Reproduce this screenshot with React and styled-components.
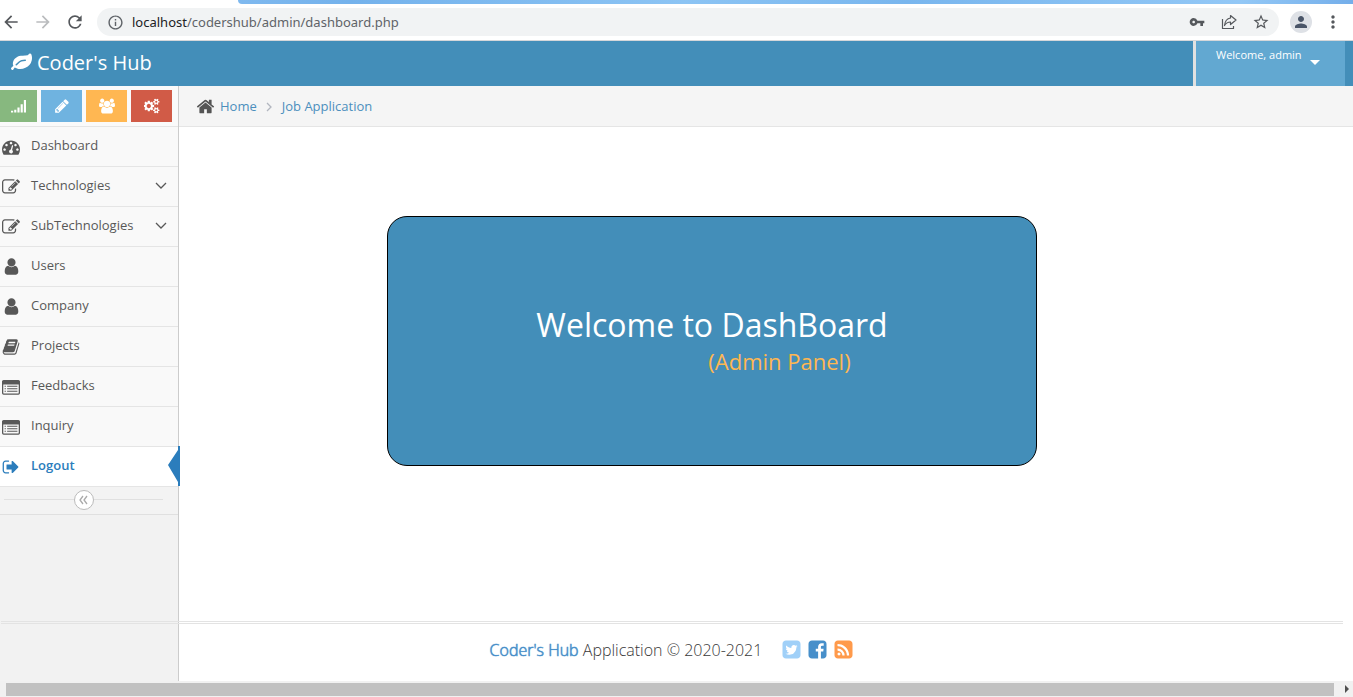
import React from "react";
import styled, { createGlobalStyle, css } from "styled-components";
import { MdArrowBack, MdArrowForward, MdRefresh, MdInfoOutline, MdVpnKey, MdStarBorder, MdPerson, MdMoreVert } from "react-icons/md";

const Global = createGlobalStyle`
  *, *::before, *::after { box-sizing: border-box; }
  body { margin: 0; background: #fff; font: 13px/20px "Open Sans", sans-serif; color: #393939; }
  a { text-decoration: none; color: #4c8fbd; }
  svg { display: block; flex: none; }
`;

const Button = styled.button`
  border: 0;
  padding: 0;
  background: none;
  font: inherit;
  cursor: pointer;
`;

const Window = styled.div`
  display: flex;
  flex-direction: column;
  min-height: 100vh;
`;

/* Browser chrome */
const TabStrip = styled.div`
  height: 4px;
  margin-left: 238px;
  border-bottom-left-radius: 6px;
  background: linear-gradient(90deg, #7fb9ef, #74b2ec 10%, #8cc4f4 40%, #79b6ee 60%, #93c8f6 90%, #74aeea);
`;
const Toolbar = styled.div`
  display: flex;
  align-items: center;
  height: 37px;
  padding: 0 5px 0 1px;
  border-bottom: 1px solid #d5d7da;
  color: #5f6368;
`;
const ToolButton = styled(Button)`
  display: grid;
  place-items: center;
  width: ${(p) => p.$width || 32}px;
  height: 28px;
  color: ${(p) => (p.$muted ? "#babcbe" : "#55585c")};
`;
const AddressBar = styled.div`
  display: flex;
  align-items: center;
  flex: 1;
  min-width: 0;
  height: 28px;
  margin-left: 11px;
  padding: 0 2px 0 10px;
  border-radius: 14px;
  background: #f1f3f4;
`;
const Address = styled.div`
  flex: 1;
  margin-left: 8px;
  font: 13px/20px "Noto Sans", "Open Sans", sans-serif;
  color: #5f6368;
  b { font-weight: 400; color: #202124; }
`;
const Avatar = styled(Button)`
  display: grid;
  place-items: center;
  width: 22px;
  height: 22px;
  margin: 0 6px 0 11px;
  border-radius: 50%;
  background: #dee1e6;
  color: #4a5568;
`;

/* Application header */
const Header = styled.header`
  display: flex;
  justify-content: space-between;
  height: 45px;
  padding: 0 8px 0 11px;
  background: #438eb9;
`;
const Brand = styled.a`
  display: flex;
  align-items: center;
  gap: 5px;
  padding-bottom: 2px;
  font-size: 20px;
  color: #fff;
`;
const UserMenu = styled(Button)`
  display: flex;
  align-items: flex-start;
  gap: 8px;
  width: 152px;
  padding: 4px 0 0 20px;
  border-left: 3px solid #e1e1e1;
  background: #62a8d1;
  font-size: 11px;
  color: #fff;
  svg { margin-top: 15px; }
`;

/* Page body */
const Body = styled.div`
  display: grid;
  flex: 1;
  grid-template-columns: 179px 1fr;
  grid-template-rows: 1fr 60px;
`;
const Sidebar = styled.aside`
  grid-column: 1;
  grid-row: 1 / -1;
  border-right: 1px solid #ccc;
  background: #f2f2f2;
`;
const Shortcuts = styled.div`
  display: flex;
  gap: 4px;
  height: 41px;
  padding: 4px 0;
  border-bottom: 1px solid #e5e5e5;
  background: #fafafa;
`;
const Shortcut = styled(Button)`
  display: grid;
  place-items: center;
  width: 41px;
  height: 32px;
  background: ${(p) => p.$color};
  color: #fff;
  &:first-child { width: 37px; }
`;
const Menu = styled.ul`
  list-style: none;
  margin: 0;
  padding: 0;
`;
const MenuItem = styled.li`
  position: relative;
  height: 40px;
  border-bottom: 1px solid #e5e5e5;
  background: ${(p) => (p.$active ? "#fff" : "#f9f9f9")};
`;
const fakeBold = css`
  text-shadow: 0 0 1px currentColor;
  -webkit-text-stroke: thin;
`;
const MenuLink = styled.a`
  display: grid;
  grid-template-columns: 22px 1fr 18px;
  column-gap: 9px;
  align-items: center;
  height: 36px;
  padding-right: 5px;
  color: #585858;
  > svg:first-child { margin: 3px auto 0; }
  > svg:last-child { margin-top: 2px; }
  ${(p) => p.$active && css`font-weight: 600; color: #2b7dbc;`}
`;
const ActiveMark = styled.svg`
  position: absolute;
  top: -1px;
  right: -2px;
`;
const Collapse = styled.div`
  display: flex;
  align-items: center;
  height: 28px;
  padding: 0 15px 2px 4px;
  border-bottom: 1px solid #e0e0e0;
  background: #f3f3f3;
  &::before, &::after { content: ""; flex: 1; height: 1px; background: #e0e0e0; }
`;
const CollapseButton = styled(Button)`
  display: grid;
  place-items: center;
  width: 20px;
  height: 20px;
  border: 1px solid #bbb;
  border-radius: 50%;
  background: #fff;
  color: #aaa;
`;
const Main = styled.main`
  grid-column: 2;
  grid-row: 1;
  min-width: 0;
`;
const Breadcrumbs = styled.nav`
  display: flex;
  align-items: center;
  height: 41px;
  padding-left: 17px;
  border-bottom: 1px solid #e5e5e5;
  background: #f5f5f5;
  a { margin-left: 5px; }
  a + svg { margin: 2px 4px 0 9px; }
`;
const WelcomeCard = styled.section`
  display: flex;
  flex-direction: column;
  align-items: center;
  justify-content: center;
  max-width: 650px;
  min-height: 250px;
  margin: 89px 16px 0 208px;
  border: 1px solid #000;
  border-radius: 20px;
  background: #438eb9;
`;
const Title = styled.h1`
  margin: 0;
  font-size: 32px;
  line-height: 40px;
  font-weight: 400;
  color: #fff;
`;
const Subtitle = styled.p`
  margin: 0;
  padding-left: 135px;
  font-size: 22px;
  line-height: 32px;
  color: #ffb752;
`;
const Footer = styled.footer`
  grid-column: 1 / -1;
  grid-row: 2;
  display: flex;
  align-items: center;
  justify-content: center;
  margin: 0 10px 0 1px;
  border-top: 3px double #e3e3e3;
  padding-bottom: 6px;
  font-size: 16px;
  font-weight: 300;
`;
const FooterBrand = styled.b`
  font-weight: 300;
  color: #478fca;
  ${fakeBold}
`;
const Socials = styled.div`
  display: flex;
  gap: 5px;
  margin-left: 19px;
`;
const Social = styled.a`
  color: ${(p) => p.$color};
`;

/* Horizontal scroll bar */
const ScrollTrack = styled.div`
  display: flex;
  align-items: center;
  height: 16px;
  padding: 0 4px 0 6px;
  background: #f1f1f1;
`;
const ScrollThumb = styled.div`
  flex: 1;
  height: 13px;
  margin-right: 11px;
  background: #c1c1c1;
`;

const paths = {
  leaf: "M1280 704q0-26-19-45t-45-19q-172 0-318 49.5t-259.5 134-235.5 219.5q-19 21-19 45 0 26 19 45t45 19q24 0 45-19 27-24 74-71t67-66q137-124 268.5-176t313.5-52q26 0 45-19t19-45zm512-198q0 95-20 193-46 224-184.5 383t-357.5 268q-214 108-438 108-148 0-286-47-15-5-88-42t-96-37q-16 0-39.5 32t-45 70-52.5 70-60 32q-43 0-63.5-17.5t-45.5-59.5q-2-4-6-11t-5.5-10-3-9.5-1.5-13.5q0-35 31-73.5t68-65.5 68-56 31-48q0-4-14-38t-16-44q-9-51-9-104 0-115 43.5-220t119-184.5 170.5-139 204-95.5q55-18 145-25.5t179.5-9 178.5-6 163.5-24 113.5-56.5l29.5-29.5 29.5-28 27-20 36.5-16 43.5-4.5q39 0 70.5 46t47.5 112 24 124 8 96z",
  signal: "M0 1408h256v192h-256zM384 1280h256v320h-256zM768 1024h256v576h-256zM1152 640h256v960h-256zM1536 128h256v1472h-256z",
  pencil: "M491 1536l91-91-235-235-91 91v107h128v128h107zm523-928q0-22-22-22-10 0-17 7l-542 542q-7 7-7 17 0 22 22 22 10 0 17-7l542-542q7-7 7-17zm-54-192l416 416-832 832h-416v-416zm683 96q0 53-37 90l-166 166-416-416 166-165q36-38 90-38 53 0 91 38l235 234q37 39 37 91z",
  users: "M593 896q-162 5-265 128H194q-82 0-138-40.500T0 865q0-353 124-353 6 0 43.500 21t97.500 42.500T384 597q67 0 133-23-5 37-5 66 0 139 81 256zm1071 637q0 120-73 189.500t-194 69.500H523q-121 0-194-69.500T256 1533q0-53 3.500-103.500t14-109T300 1212t43-97.500 62-81 85.500-53.500T602 960q10 0 43 21.500t73 48 107 48 135 21.500 135-21.500 107-48 73-48 43-21.500q61 0 111.500 20t85.500 53.500 62 81 43 97.500 26.500 108.500 14 109 3.500 103.500zM640 256q0 106-75 181t-181 75-181-75-75-181 75-181T384 0t181 75 75 181zm704 384q0 159-112.500 271.500T960 1024 688.500 911.500 576 640t112.500-271.500T960 256t271.500 112.500T1344 640zm576 225q0 78-56 118.500t-138 40.500h-134q-103-123-265-128 81-117 81-256 0-29-5-66 66 23 133 23 59 0 119-21.500t97.500-42.500 43.500-21q124 0 124 353zm-128-609q0 106-75 181t-181 75-181-75-75-181 75-181 181-75 181 75 75 181z",
  cogs: "M832 896q0-106-75-181t-181-75-181 75-75 181 75 181 181 75 181-75 75-181zm768 512q0-52-38-90t-90-38-90 38-38 90q0 53 37.500 90.500t90.500 37.500 90.500-37.500 37.500-90.500zm0-1024q0-52-38-90t-90-38-90 38-38 90q0 53 37.500 90.500t90.500 37.500 90.500-37.500 37.500-90.500zm-384 421v185q0 10-7 19.500t-16 10.500l-155 24q-11 35-32 76 34 48 90 115 7 11 7 20 0 12-7 19-23 30-82.500 89.500t-78.500 59.500q-11 0-21-7l-115-90q-37 19-77 31-11 108-23 155-7 24-30 24h-186q-11 0-20-7.500t-10-17.500l-23-153q-34-10-75-31l-118 89q-7 7-20 7-11 0-21-8-144-133-144-160 0-9 7-19 10-14 41-53t47-61q-23-44-35-82l-152-24q-10-1-17-9.500t-7-19.500v-185q0-10 7-19.500t16-10.500l155-24q11-35 32-76-34-48-90-115-7-11-7-20 0-12 7-20 22-30 82-89t79-59q11 0 21 7l115 90q34-18 77-32 11-108 23-154 7-24 30-24h186q11 0 20 7.500t10 17.500l23 153q34 10 75 31l118-89q8-7 20-7 11 0 21 8 144 133 144 160 0 8-7 19-12 16-42 54t-45 60q23 48 34 82l152 23q10 2 17 10.500t7 19.500zm640 533v140q0 16-149 31-12 27-30 52 51 113 51 138 0 4-4 7-122 71-124 71-8 0-46-47t-52-68q-20 2-30 2t-30-2q-14 21-52 68t-46 47q-2 0-124-71-4-3-4-7 0-25 51-138-18-25-30-52-149-15-149-31v-140q0-16 149-31 13-29 30-52-51-113-51-138 0-4 4-7 4-2 35-20t59-34 30-16q8 0 46 46.500t52 67.500q20-2 30-2t30 2q51-71 92-112l6-2q4 0 124 70 4 3 4 7 0 25-51 138 17 23 30 52 149 15 149 31zm0-1024v140q0 16-149 31-12 27-30 52 51 113 51 138 0 4-4 7-122 71-124 71-8 0-46-47t-52-68q-20 2-30 2t-30-2q-14 21-52 68t-46 47q-2 0-124-71-4-3-4-7 0-25 51-138-18-25-30-52-149-15-149-31v-140q0-16 149-31 13-29 30-52-51-113-51-138 0-4 4-7 4-2 35-20t59-34 30-16q8 0 46 46.500t52 67.500q20-2 30-2t30 2q51-71 92-112l6-2q4 0 124 70 4 3 4 7 0 25-51 138 17 23 30 52 149 15 149 31z",
  gauge: "M384 1152q0-53-37.5-90.5t-90.5-37.5-90.5 37.5-37.5 90.5 37.5 90.5 90.5 37.5 90.5-37.5 37.5-90.5zm192-448q0-53-37.5-90.5t-90.5-37.5-90.5 37.5-37.5 90.5 37.5 90.5 90.5 37.5 90.5-37.5 37.5-90.5zm428 481l101-382q6-26-7.5-48.5t-38.5-29.5-48 6.5-30 39.5l-101 382q-60 5-107 43.5t-63 98.5q-20 77 20 146t117 89 146-20 89-117q16-60-6-117t-72-91zm660-33q0-53-37.5-90.5t-90.5-37.5-90.5 37.5-37.5 90.5 37.5 90.5 90.5 37.5 90.5-37.5 37.5-90.5zm-640-640q0-53-37.5-90.5t-90.5-37.5-90.5 37.5-37.5 90.5 37.5 90.5 90.5 37.5 90.5-37.5 37.5-90.5zm448 192q0-53-37.5-90.5t-90.5-37.5-90.5 37.5-37.5 90.5 37.5 90.5 90.5 37.5 90.5-37.5 37.5-90.5zm320 448q0 261-141 483-19 29-54 29h-1402q-35 0-54-29-141-221-141-483 0-182 71-348t191-286 286-191 348-71 348 71 286 191 191 286 71 348z",
  edit: "M888 1184l116-116-152-152-116 116v56h96v96h56zm440-720q-16-16-33 1l-350 350q-17 17-1 33t33-1l350-350q17-17 1-33zm80 594v190q0 119-84.5 203.5t-203.5 84.5h-832q-119 0-203.5-84.5t-84.5-203.5v-832q0-119 84.5-203.5t203.5-84.5h832q63 0 117 25 15 7 18 23 3 17-9 29l-49 49q-14 14-32 8-23-6-45-6h-832q-66 0-113 47t-47 113v832q0 66 47 113t113 47h832q66 0 113-47t47-113v-126q0-13 9-22l64-64q15-15 35-7t20 29zm-96-738l288 288-672 672h-288v-288zm444 132l-92 92-288-288 92-92q28-28 68-28t68 28l152 152q28 28 28 68t-28 68z",
  user: "M1536 1399q0 109-62.5 187t-150.5 78h-854q-88 0-150.5-78t-62.5-187q0-85 8.5-160.5t31.5-152 58.5-131 94-89 134.5-34.5q131 128 313 128t313-128q76 0 134.5 34.5t94 89 58.5 131 31.5 152 8.5 160.5zm-256-887q0 159-112.5 271.5t-271.5 112.5-271.5-112.5-112.5-271.5 112.5-271.5 271.5-112.5 271.5 112.5 112.5 271.5z",
  book: "M1703 478q40 57 18 129l-275 906q-19 64-76.5 107.5t-122.5 43.5h-923q-77 0-148.5-53.5t-99.5-131.5q-24-67-2-127 0-4 3-27t4-37q1-8-3-21.5t-3-19.5q2-11 8-21t16.5-23.5 16.5-23.5q23-38 45-91.5t30-91.5q3-10 .5-30t-.5-28q3-11 17-28t17-23q21-36 42-92t25-90q1-9-2.5-32t.5-28q4-13 22-30.5t22-22.5q19-26 42.5-84.5t27.5-96.5q1-8-3-25.5t-2-26.5q2-8 9-18t18-23 17-21q8-12 16.5-30.5t15-35 16-36 19.5-32 26.5-23.5 36-11.5 47.5 5.5l-1 3q38-9 51-9h761q74 0 114 56t18 130l-274 906q-36 119-71.5 153.5t-128.5 34.5h-869q-27 0-38 15-11 16-1 43 24 70 144 70h923q29 0 56-15.5t35-41.5l300-987q7-22 5-57 38 15 59 43zm-1064 2q-4 13 2 22.5t20 9.5h608q13 0 25.5-9.5t16.5-22.5l21-64q4-13-2-22.5t-20-9.5h-608q-13 0-25.5 9.5t-16.5 22.5zm-83 256q-4 13 2 22.5t20 9.5h608q13 0 25.5-9.5t16.5-22.5l21-64q4-13-2-22.5t-20-9.5h-608q-13 0-25.5 9.5t-16.5 22.5z",
  list: "M160 192h1472q66 0 113 47t47 113v1152q0 66-47 113t-113 47H160q-66 0-113-47T0 1504V352q0-66 47-113t113-47zM128 640v864q0 32 32 32h1472q32 0 32-32V640zM256 768h128v110H256zM512 768h1024v110H512zM256 1010h128v110H256zM512 1010h1024v110H512zM256 1260h128v120H256zM512 1260h1024v120H512z",
  logout: "M704 1440q0 4 1 20t.5 26.5-3 23.5-10 19.5-20.5 6.5h-320q-119 0-203.5-84.5t-84.5-203.5v-704q0-119 84.5-203.5t203.5-84.5h320q13 0 22.5 9.5t9.5 22.5q0 4 1 20t.5 26.5-3 23.5-10 19.5-20.5 6.5h-320q-66 0-113 47t-47 113v704q0 66 47 113t113 47h312l11.5 1 11.5 3 8 5.5 7 9 2 13.5zm928-544q0 26-19 45l-544 544q-19 19-45 19t-45-19-19-45v-288h-448q-26 0-45-19t-19-45v-384q0-26 19-45t45-19h448v-288q0-26 19-45t45-19 45 19l544 544q19 19 19 45z",
  home: "M1472 992v480q0 26-19 45t-45 19h-384v-384h-256v384h-384q-26 0-45-19t-19-45v-480q0-1 .5-3t.5-3l575-474 575 474q1 2 1 6zm223-69l-62 74q-8 9-21 11h-3q-13 0-21-7l-692-577-692 577q-12 8-24 7-13-2-21-11l-62-74q-8-10-7-23.5t11-21.5l719-599q32-26 76-26t76 26l244 204v-195q0-14 9-23t23-9h192q14 0 23 9t9 23v408l219 182q10 8 11 21.5t-7 23.5z",
  twitter: "M1408 610q-56 25-121 34 68-40 93-117-65 38-134 51-61-66-153-66-87 0-148.500 61.500t-61.500 148.500q0 29 5 48-129-7-242-65t-192-155q-29 50-29 106 0 114 91 175-47-1-100-26v2q0 75 50 133.500t123 72.500q-29 8-51 8-13 0-39-4 21 63 74.500 104t121.500 42q-116 90-261 90-26 0-50-3 148 94 322 94 112 0 210-35.500t168-95 120.500-137 75-162 24.500-168.500q0-18-1-27 63-45 105-109zm256-194v960q0 119-84.500 203.500t-203.500 84.500h-960q-119 0-203.500-84.500t-84.500-203.500v-960q0-119 84.500-203.500t203.500-84.500h960q119 0 203.500 84.500t84.500 203.500z",
  facebook: "M1376 128q119 0 203.500 84.500t84.500 203.500v960q0 119-84.500 203.500t-203.500 84.500h-188v-595h199l30-232h-229v-148q0-56 23.500-84t91.500-28l122-1v-207q-63-9-178-9-136 0-217.500 80t-81.500 226v171h-200v232h200v595h-532q-119 0-203.500-84.500t-84.500-203.500v-960q0-119 84.500-203.500t203.500-84.500h960z",
  rss: "M640 1280q0-53-37.500-90.500t-90.500-37.500-90.500 37.500-37.500 90.500 37.500 90.500 90.500 37.500 90.500-37.500 37.500-90.500zm351 94q-13-232-177-396t-396-177q-14-1-24 9t-10 23v128q0 13 8.500 22t21.500 10q154 11 264 121t121 264q1 13 10 21.500t22 8.500h128q13 0 23-10t9-24zm384 1q-5-154-56-297.500t-139.500-260-205-205-260-139.500-297.500-56q-14-1-23 9-10 10-10 23v128q0 13 9 22t22 10q204 7 378 111.500t278.500 278.500 111.500 378q1 13 10 22t22 9h128q13 0 23-10 11-9 9-23zm289-959v960q0 119-84.500 203.500t-203.500 84.500h-960q-119 0-203.500-84.500t-84.500-203.500v-960q0-119 84.500-203.500t203.500-84.500h960q119 0 203.500 84.500t84.500 203.500z",
};

const Glyph = ({ name, size = 18, color = "currentColor", box = 1792 }) => (
  <svg width={size} height={size} viewBox={`0 0 ${box} 1792`} fill={color} fillRule={name === "list" ? "evenodd" : "nonzero"} aria-hidden="true">
    <path d={paths[name]} />
  </svg>
);

const Angle = ({ d, width = 12, height = 12, stroke = "currentColor", weight = 1.3 }) => (
  <svg width={width} height={height} viewBox={`0 0 ${width} ${height}`} fill="none" stroke={stroke} strokeWidth={weight} aria-hidden="true">
    <path d={d} />
  </svg>
);

const items = [
  { label: "Dashboard", icon: "gauge" },
  { label: "Technologies", icon: "edit", open: true },
  { label: "SubTechnologies", icon: "edit", open: true },
  { label: "Users", icon: "user", size: 19 },
  { label: "Company", icon: "user", size: 19 },
  { label: "Projects", icon: "book" },
  { label: "Feedbacks", icon: "list" },
  { label: "Inquiry", icon: "list" },
  { label: "Logout", icon: "logout", active: true },
];

export default function App() {
  return (
    <Window>
      <Global />
      <TabStrip />
      <Toolbar>
        <ToolButton aria-label="Back" $width={20}><MdArrowBack size={20} /></ToolButton>
        <ToolButton aria-label="Forward" $width={43} $muted><MdArrowForward size={20} /></ToolButton>
        <ToolButton aria-label="Reload" $width={22}><MdRefresh size={20} /></ToolButton>
        <AddressBar>
          <MdInfoOutline size={17} />
          <Address><b>localhost</b>/codershub/admin/dashboard.php</Address>
          <ToolButton aria-label="Passwords"><MdVpnKey size={16} /></ToolButton>
          <ToolButton aria-label="Share">
            <svg width="16" height="16" viewBox="0 0 16 16" fill="none" stroke="currentColor" strokeWidth="1.2" strokeLinejoin="round">
              <path d="M1.5 5v9.5h11V12" />
              <path d="M9.5 1.5l5.5 4.500-5.500 4.500V8C7 8 5 9 3.500 11.500 4 7 6 4.500 9.500 4z" />
            </svg>
          </ToolButton>
          <ToolButton aria-label="Bookmark"><MdStarBorder size={18} /></ToolButton>
        </AddressBar>
        <Avatar aria-label="Profile"><MdPerson size={18} /></Avatar>
        <ToolButton aria-label="More" $width={30}><MdMoreVert size={20} /></ToolButton>
      </Toolbar>

      <Header>
        <Brand href="#"><Glyph name="leaf" size={21} />Coder's Hub</Brand>
        <UserMenu>
          Welcome, admin
          <svg width="10" height="5" viewBox="0 0 10 5" fill="#fff"><path d="M0 0h10L5 5z" /></svg>
        </UserMenu>
      </Header>

      <Body>
        <Sidebar>
          <Shortcuts>
            <Shortcut $color="#87b87f" aria-label="Statistics"><Glyph name="signal" size={15} /></Shortcut>
            <Shortcut $color="#6fb3e0" aria-label="Edit"><Glyph name="pencil" size={16} /></Shortcut>
            <Shortcut $color="#ffb752" aria-label="Users"><Glyph name="users" size={16} box={1920} /></Shortcut>
            <Shortcut $color="#d15b47" aria-label="Settings"><Glyph name="cogs" size={16} box={1920} /></Shortcut>
          </Shortcuts>
          <Menu>
            {items.map(({ label, icon, size, open, active }) => (
              <MenuItem key={label} $active={active}>
                <MenuLink href="#" $active={active}>
                  <Glyph name={icon} size={size} />
                  <span>{label}</span>
                  {open && <Angle d="M1 3l5 5 5-5" />}
                </MenuLink>
                {active && (
                  <ActiveMark width="12" height="40" viewBox="0 0 12 40" fill="#2b7dbc"><path d="M12 0v40h-2v-4L0 19 10 4V0z" /></ActiveMark>
                )}
              </MenuItem>
            ))}
          </Menu>
          <Collapse>
            <CollapseButton aria-label="Collapse sidebar"><Angle d="M5 2L2 6l3 4M9 2L6 6l3 4" width={11} /></CollapseButton>
          </Collapse>
        </Sidebar>
        <Main>
          <Breadcrumbs aria-label="Breadcrumb">
            <Glyph name="home" size={19} color="#555" />
            <a href="#">Home</a>
            <Angle d="M1 1l4 4-4 4" width={7} height={10} stroke="#b2b6bf" />
            <a href="#">Job Application</a>
          </Breadcrumbs>
          <WelcomeCard>
            <Title>Welcome to DashBoard</Title>
            <Subtitle>(Admin Panel)</Subtitle>
          </WelcomeCard>
        </Main>
        <Footer>
          <span><FooterBrand>Coder's Hub</FooterBrand> Application © 2020-2021</span>
          <Socials>
            <Social href="#" aria-label="Twitter" $color="#a0d0f8"><Glyph name="twitter" size={21} /></Social>
            <Social href="#" aria-label="Facebook" $color="#478fca"><Glyph name="facebook" size={21} /></Social>
            <Social href="#" aria-label="RSS" $color="#ff9a4b"><Glyph name="rss" size={21} /></Social>
          </Socials>
        </Footer>
      </Body>
      <ScrollTrack>
        <ScrollThumb />
        <svg width="4" height="8" viewBox="0 0 4 8" fill="#505050"><path d="M0 0l4 4-4 4z" /></svg>
      </ScrollTrack>
    </Window>
  );
}
